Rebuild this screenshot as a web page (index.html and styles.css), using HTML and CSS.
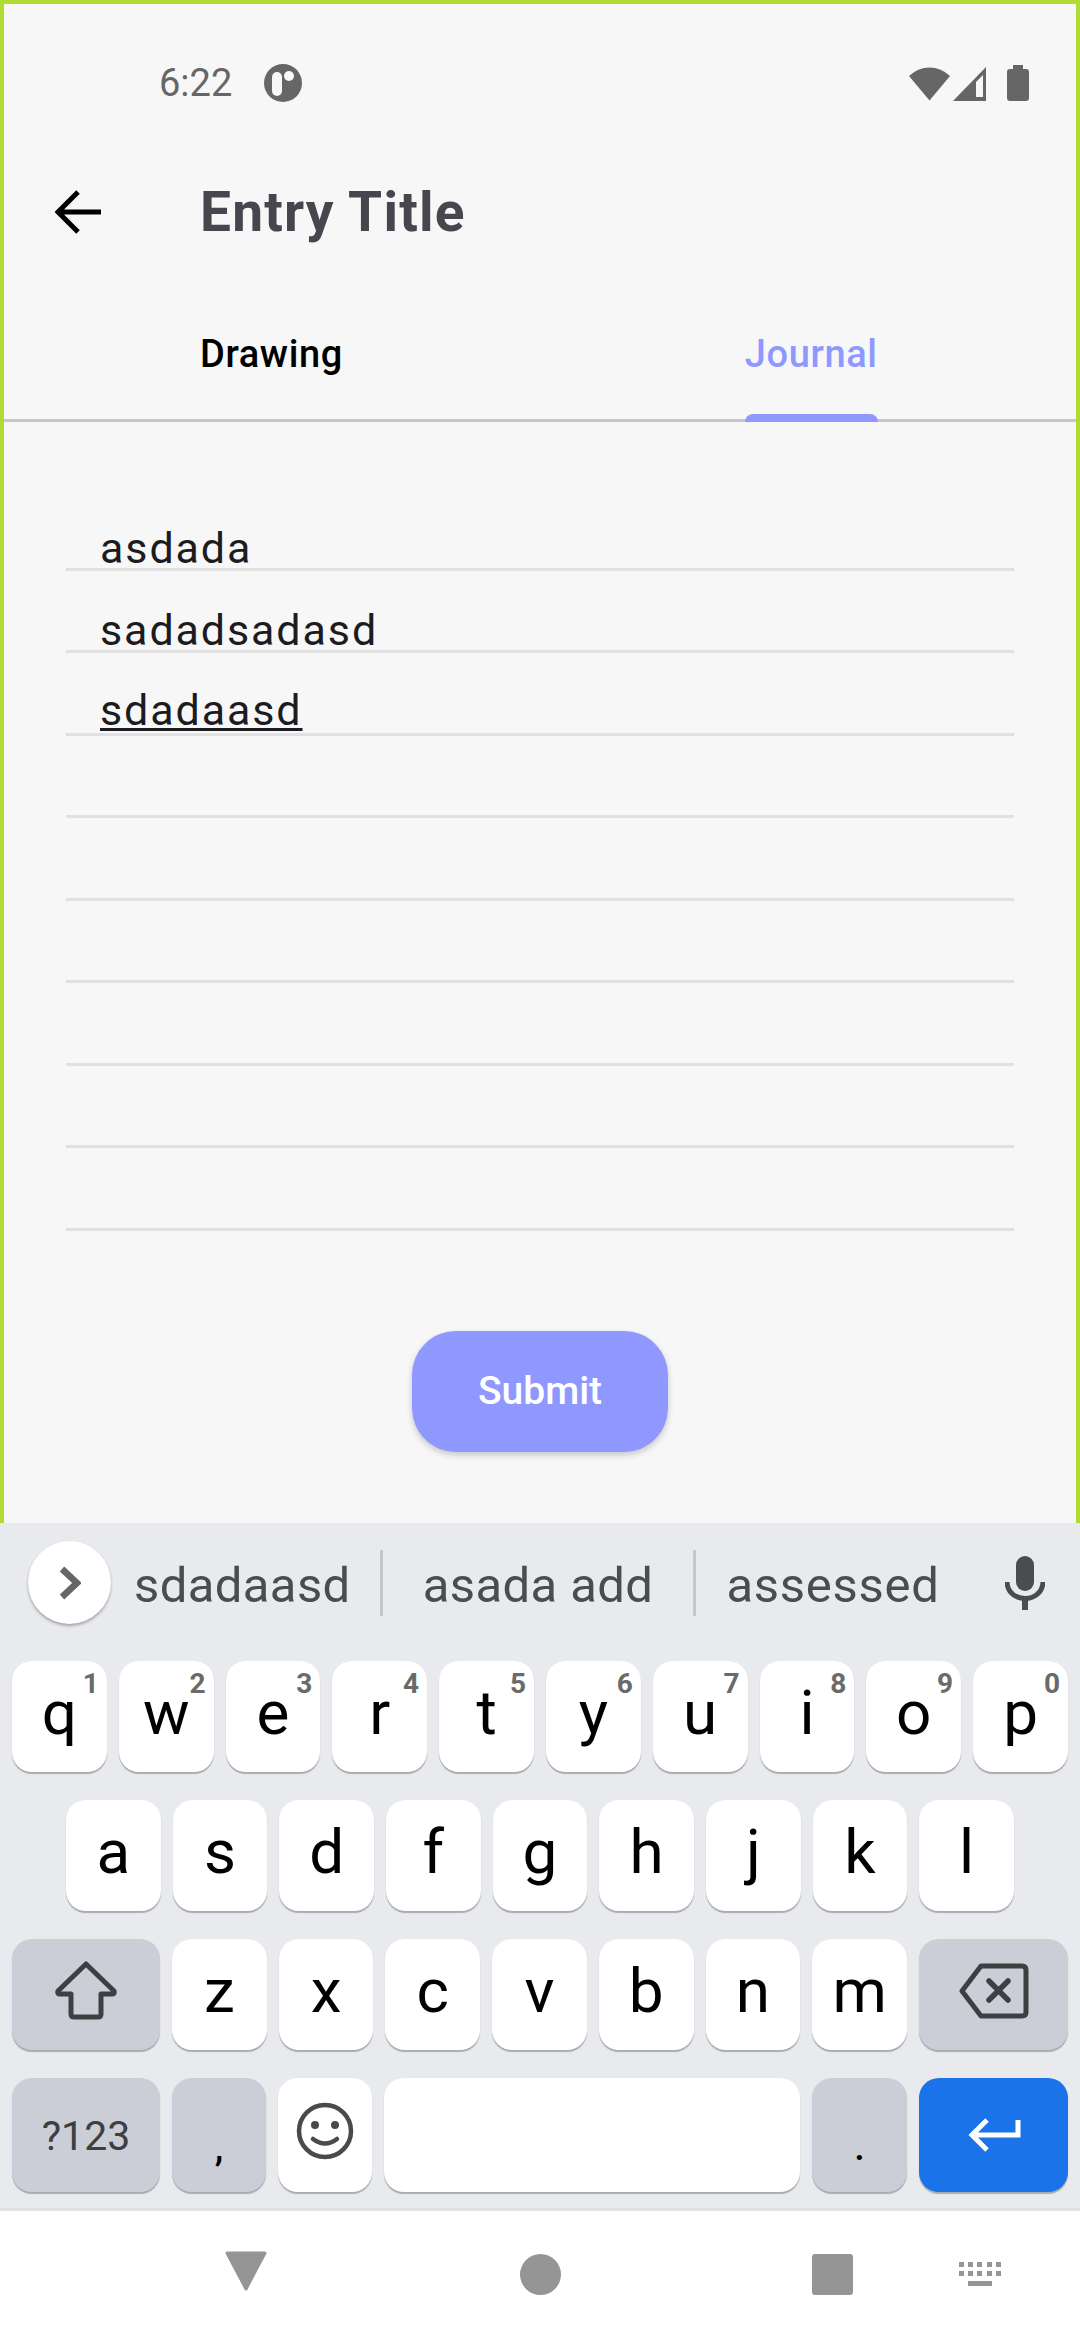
FILE: index.html
```html
<!DOCTYPE html>
<html>
<head>
<title>Entry Title</title>
<link rel="stylesheet" href="styles.css">
</head>
<body>
<div class="screen">
  <div class="app">
    <div class="status">
      <span class="time">6:22</span>
      <svg class="status-badge" width="38" height="38" viewBox="0 0 38 38">
        <circle cx="19" cy="19" r="19" fill="#666"/>
        <rect x="8" y="8" width="10" height="24" rx="5" fill="#f7f7f7"/>
        <circle cx="25" cy="12" r="5" fill="#f7f7f7"/>
      </svg>
      <div class="status-icons">
        <svg width="41" height="35" viewBox="0 0 41 35"><path d="M20.5 34.5 L0 10 A29 29 0 0 1 41 10 Z" fill="#666"/></svg>
        <svg width="34" height="35" viewBox="0 0 34 35"><path fill-rule="evenodd" d="M33 1 V35 H0 Z M23 12 V31 H30 V9 L23 16 Z" fill="#666"/></svg>
        <svg width="22" height="36" viewBox="0 0 22 36"><path d="M6 0 H16 V4 H19 Q22 4 22 7 V33 Q22 36 19 36 H3 Q0 36 0 33 V7 Q0 4 3 4 H6 Z" fill="#666"/></svg>
      </div>
    </div>
    <div class="toolbar">
      <svg class="back" width="46" height="44" viewBox="0 0 46 44"><path d="M46 22 H5 M23 2 L3 22 L23 42" fill="none" stroke="#000" stroke-width="5"/></svg>
      <h1>Entry Title</h1>
    </div>
    <div class="tabs">
      <span class="tab">Drawing</span>
      <span class="tab active">Journal</span>
    </div>
    <div class="journal">
      <div class="line">asdada</div>
      <div class="line">sadadsadasd</div>
      <div class="line current"><u>sdadaasd</u></div>
      <div class="line"></div>
      <div class="line"></div>
      <div class="line"></div>
      <div class="line"></div>
      <div class="line"></div>
      <div class="line"></div>
    </div>
    <button class="submit" type="button">Submit</button>
  </div>

  <div class="keyboard">
    <div class="suggestions">
      <div class="chevron">
        <svg width="22" height="34" viewBox="0 0 22 34"><path d="M3 3 L18 17 L3 31" fill="none" stroke="#666" stroke-width="6.5"/></svg>
      </div>
      <span class="word first">sdadaasd</span>
      <span class="divider"></span>
      <span class="word second">asada add</span>
      <span class="divider"></span>
      <span class="word third">assessed</span>
      <svg class="mic" width="40" height="54" viewBox="0 0 40 54">
        <rect x="11" y="0" width="18" height="35" rx="9" fill="#4a4c50"/>
        <path d="M2 26 C3 48 37 48 38 26" fill="none" stroke="#4a4c50" stroke-width="5"/>
        <rect x="17" y="40" width="6" height="14" fill="#4a4c50"/>
      </svg>
    </div>
    <div class="keys">
      <div class="row row-top">
        <div class="key">q<sup>1</sup></div>
        <div class="key">w<sup>2</sup></div>
        <div class="key">e<sup>3</sup></div>
        <div class="key">r<sup>4</sup></div>
        <div class="key">t<sup>5</sup></div>
        <div class="key">y<sup>6</sup></div>
        <div class="key">u<sup>7</sup></div>
        <div class="key">i<sup>8</sup></div>
        <div class="key">o<sup>9</sup></div>
        <div class="key">p<sup>0</sup></div>
      </div>
      <div class="row row-home">
        <div class="key">a</div>
        <div class="key">s</div>
        <div class="key">d</div>
        <div class="key">f</div>
        <div class="key">g</div>
        <div class="key">h</div>
        <div class="key">j</div>
        <div class="key">k</div>
        <div class="key">l</div>
      </div>
      <div class="row row-shift">
        <div class="key dark">
          <svg width="62" height="60" viewBox="0 0 62 60"><path d="M31 3 L59 30 Q60 33 57 33 H46 V53 Q46 56 43 56 H19 Q16 56 16 53 V33 H5 Q2 33 3 30 Z" fill="none" stroke="#3c4043" stroke-width="5" stroke-linejoin="round"/></svg>
        </div>
        <div class="key">z</div>
        <div class="key">x</div>
        <div class="key">c</div>
        <div class="key">v</div>
        <div class="key">b</div>
        <div class="key">n</div>
        <div class="key">m</div>
        <div class="key dark">
          <svg width="70" height="56" viewBox="0 0 70 56"><path d="M22 3 H63 Q67 3 67 7 V49 Q67 53 63 53 H22 L3 28 Z" fill="none" stroke="#3c4043" stroke-width="5" stroke-linejoin="round"/><path d="M30 18 L49 37 M49 18 L30 37" stroke="#3c4043" stroke-width="5.5" stroke-linecap="round"/></svg>
        </div>
      </div>
      <div class="row row-bottom">
        <div class="key dark symbols">?123</div>
        <div class="key dark mark">,</div>
        <div class="key">
          <svg width="58" height="58" viewBox="0 0 58 58">
            <circle cx="29" cy="29" r="26" fill="none" stroke="#4a4a4a" stroke-width="4.5"/>
            <circle cx="19" cy="23" r="4" fill="#4a4a4a"/>
            <circle cx="39" cy="23" r="4" fill="#4a4a4a"/>
            <path d="M17 37 Q29 46 41 37" fill="none" stroke="#4a4a4a" stroke-width="4.5" stroke-linecap="round"/>
          </svg>
        </div>
        <div class="key"></div>
        <div class="key dark mark">.</div>
        <div class="key enter">
          <svg width="54" height="34" viewBox="0 0 54 34"><path d="M51 2 V17 H6 M20 2 L5 17 L20 32" fill="none" stroke="#fff" stroke-width="5"/></svg>
        </div>
      </div>
    </div>
  </div>

  <div class="nav">
    <svg class="nav-back" width="44" height="40" viewBox="0 0 44 40"><path d="M3 2 H41 L22 38 Z" fill="#959595" stroke="#959595" stroke-width="3" stroke-linejoin="round"/></svg>
    <span class="nav-home"></span>
    <span class="nav-recent"></span>
    <svg class="nav-kbd" width="42" height="24" viewBox="0 0 42 24" fill="#959595">
      <rect x="0" y="0" width="5" height="5"/><rect x="9" y="0" width="5" height="5"/><rect x="18" y="0" width="5" height="5"/><rect x="28" y="0" width="5" height="5"/><rect x="37" y="0" width="5" height="5"/>
      <rect x="0" y="9" width="5" height="5"/><rect x="9" y="9" width="5" height="5"/><rect x="18" y="9" width="5" height="5"/><rect x="28" y="9" width="5" height="5"/><rect x="37" y="9" width="5" height="5"/>
      <rect x="9" y="19" width="24" height="5"/>
    </svg>
  </div>
</div>
</body>
</html>
```

FILE: styles.css
```css
* {
    box-sizing: border-box;
}

body {
    margin: 0;
    font-family: Roboto, "Liberation Sans", sans-serif;
    background-color: #fff;
}

.screen {
    width: 1080px;
    height: 2340px;
    display: flex;
    flex-direction: column;
    overflow: hidden;
}

/* app area */
.app {
    height: 1523px;
    display: flex;
    flex-direction: column;
    background-color: #f7f7f7;
    border: solid #b0dc32;
    border-width: 4px 4px 0;
}

.status {
    height: 158px;
    display: flex;
    align-items: center;
    padding: 0 47px 0 155px;
}

.time {
    font-size: 38px;
    color: #666;
}

.status-badge {
    margin-left: 32px;
}

.status-icons {
    margin-left: auto;
    display: flex;
    align-items: center;
    gap: 3px;
}

.status-icons svg:last-child {
    margin-left: 17px;
}

.toolbar {
    height: 100px;
    display: flex;
    align-items: center;
    padding-left: 51px;
}

.back {
    margin-right: 99px;
}

h1 {
    margin: 0;
    font-size: 55px;
    font-weight: 700;
    letter-spacing: 1.2px;
    color: #49454f;
}

.tabs {
    height: 160px;
    display: flex;
    padding: 0 0 0 196px;
    border-bottom: 3px solid #cac4d0;
}

.tab {
    position: relative;
    font-size: 38px;
    font-weight: 500;
    letter-spacing: 0.6px;
    line-height: 185px;
    color: #000;
}

.tab.active {
    margin-left: 402px;
    color: #8f98ff;
}

.tab.active::after {
    content: "";
    position: absolute;
    left: 0;
    right: 0;
    bottom: -3px;
    height: 8px;
    background-color: #8f98ff;
    border-radius: 8px 8px 0 0;
}

.journal {
    margin: 66px 62px 0;
}

.line {
    height: 82.5px;
    display: flex;
    align-items: flex-end;
    padding-left: 34px;
    font-size: 43px;
    line-height: 39px;
    letter-spacing: 1.9px;
    color: #1c1b1f;
    border-bottom: 3px solid #e1e1e1;
}

.line.current {
    padding-bottom: 3px;
}

.line u {
    text-decoration-thickness: 3px;
    text-underline-offset: 3px;
}

.submit {
    align-self: center;
    width: 256px;
    height: 121px;
    margin-top: 100px;
    border: none;
    border-radius: 44px;
    background-color: #8f98ff;
    color: #fff;
    font-family: inherit;
    font-size: 39px;
    font-weight: 500;
    box-shadow: 0 3px 6px rgba(0,0,0,0.2);
}

/* keyboard */
.keyboard {
    height: 688px;
    background-color: #e8eaed;
    border-bottom: 3px solid #e1e1e3;
}

.suggestions {
    height: 138px;
    display: flex;
    align-items: center;
    padding: 0 0 18px 28px;
}

.chevron {
    width: 83px;
    height: 83px;
    margin-top: -1px;
    display: flex;
    align-items: center;
    justify-content: center;
    border-radius: 50%;
    background-color: #fff;
    box-shadow: 0 2px 3px rgba(0,0,0,0.3);
}

.word {
    font-size: 49px;
    letter-spacing: 0.4px;
    color: #4a4c50;
    margin-top: 4px;
}

.word.first {
    width: 269px;
    padding-left: 23px;
}

.word.second {
    width: 310px;
    text-align: center;
}

.word.third {
    width: 274px;
    letter-spacing: 0.7px;
    text-align: center;
}

.divider {
    width: 3px;
    height: 66px;
    background-color: #c4c6ca;
}

.mic {
    margin-left: 35px;
}

.keys {
    display: flex;
    flex-direction: column;
    gap: 28px;
    padding: 0 12px;
}

.row {
    display: grid;
    gap: 12px;
    height: 111px;
}

.row-top {
    grid-template-columns: repeat(10, 1fr);
}

.row-home {
    grid-template-columns: repeat(9, 1fr);
    padding: 0 54px;
}

.row-shift {
    grid-template-columns: 148px repeat(7, 1fr) 149px;
}

.row-bottom {
    grid-template-columns: 148px 94px 94px 1fr 95px 149px;
    height: 114px;
}

.key {
    position: relative;
    display: flex;
    align-items: center;
    justify-content: center;
    padding-bottom: 8px;
    font-size: 62px;
    color: #000;
    background-color: #fff;
    border-radius: 20px;
    box-shadow: 0 2px 1px #a9abb0;
}

.key sup {
    position: absolute;
    top: 9px;
    right: 8px;
    font-size: 28px;
    font-weight: 700;
    line-height: 1;
    color: #6a6a6a;
}

.key.dark {
    background-color: #cbced6;
}

.key.symbols {
    padding: 2px 0 0;
    font-size: 41px;
    color: #3c4043;
}

.key.mark {
    padding: 24px 0 0;
    font-size: 38px;
    font-weight: 500;
}

.key.enter {
    background-color: #1a73e8;
    padding: 0;
}

/* navigation bar */
.nav {
    flex: 1;
    background-color: #fff;
    display: flex;
    align-items: center;
    padding-bottom: 3px;
}

.nav-back {
    margin-left: 224px;
    margin-bottom: 7px;
}

.nav-home {
    width: 41px;
    height: 41px;
    margin-left: 252px;
    border-radius: 50%;
    background-color: #959595;
}

.nav-recent {
    width: 41px;
    height: 41px;
    margin-left: 251px;
    border-radius: 3px;
    background-color: #959595;
}

.nav-kbd {
    margin-left: 106px;
}
```
